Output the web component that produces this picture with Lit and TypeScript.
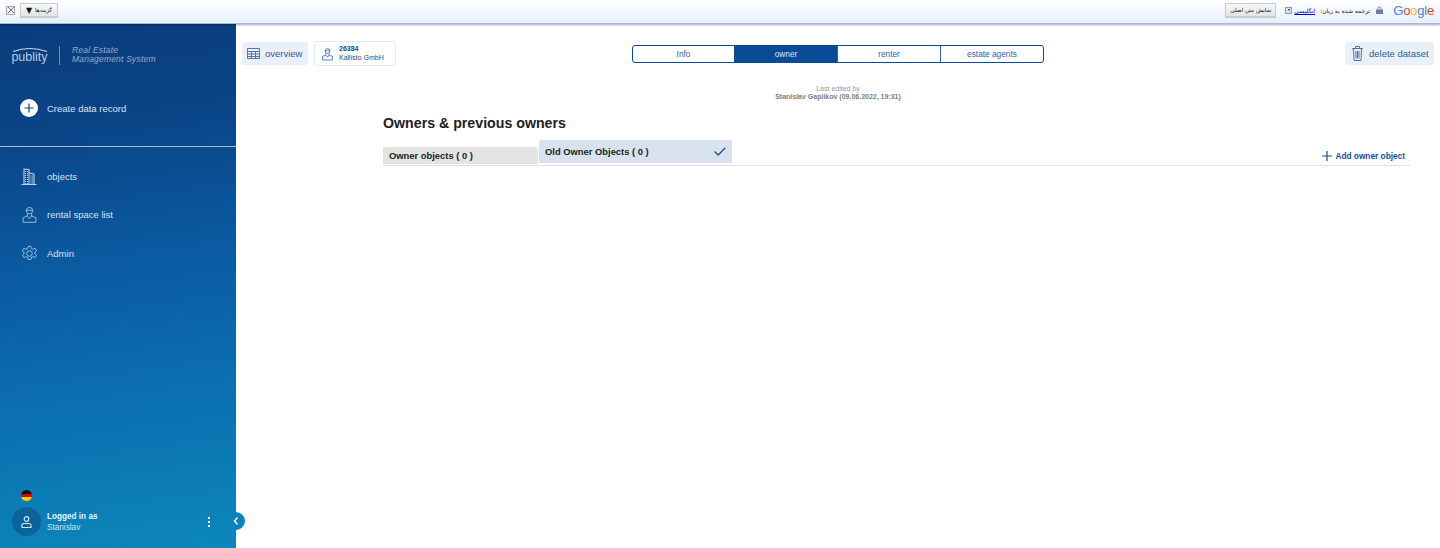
import { LitElement, html, css, svg } from "lit";
import { customElement } from "lit/decorators.js";

const personIcon = svg`<circle cx="12" cy="6.500" r="4.500"/><path d="M7.500 6h9M9 11v3l-6 2.500V23h18v-6.500L15 14v-3M9 14l3 4 3-4"/>`;

@customElement("app-root")
export class AppRoot extends LitElement {
  static styles = css`
    :host { display: flex; flex-direction: column; width: 1440px; height: 548px; overflow: hidden; background: #fff; font-family: "Liberation Sans", Arial, sans-serif; }
    * { box-sizing: border-box; }
    svg { display: block; flex: none; }
    .gt { height: 24px; flex: none; display: flex; align-items: center; padding: 0 6px 3px 6px; background: linear-gradient(#ffffff, #e6effb); border-bottom: 1px solid #9dbcf0; box-shadow: 0 1px 2px rgba(0,0,0,.35); position: relative; z-index: 2; font-family: "DejaVu Sans", sans-serif; font-size: 6px; color: #222; }
    .gt-x { width: 9px; height: 9px; border: 1px solid #aaa; background: #eee; margin-right: 5px; display: flex; align-items: center; justify-content: center; }
    .gt-btn { height: 14px; display: flex; align-items: center; justify-content: center; gap: 3px; background: linear-gradient(#f8f8f8, #e4e4e4); border: 1px solid #ccc; box-shadow: 0 1px 1px rgba(0,0,0,.15); color: #111; font-size: 5.7px; }
    .opts { width: 38px; }
    .orig { width: 51px; }
    .arrow { font-size: 8px; }
    .gt-right { margin-left: auto; display: flex; align-items: center; }
    .gt-drop { width: 7px; height: 7px; background: #d5e3fa; border: 1px solid #7a9cd8; margin: 0 2px 0 9px; display: flex; align-items: center; justify-content: center; }
    .gt-drop i { display: block; border-left: 1.5px solid transparent; border-right: 1.5px solid transparent; border-top: 2.5px solid #123; }
    .gt-link { color: #00c; text-decoration: underline; font-size: 6px; }
    .gt-lang { margin-left: 5px; }
    .gt-lock { margin: 0 10px 0 6px; }
    .google { font-family: "Liberation Sans", sans-serif; font-size: 13px; letter-spacing: -.2px; }
    .b { color: #4285f4; } .r { color: #ea4335; } .y { color: #fbbc05; } .g { color: #34a853; }
    .main { flex: 1; display: flex; min-height: 0; }

    .side { width: 236px; flex: none; display: flex; flex-direction: column; color: #d5e4f0; font-size: 9.5px; position: relative;
      background: linear-gradient(172deg, #0a3c7c 0%, #0a4688 22%, #0b5aa2 45%, #0b6fb0 70%, #0c87bb 100%); }
    .brand { height: 123px; flex: none; border-bottom: 1px solid #9fc0d8; display: flex; flex-direction: column; padding: 20px 0 0 11px; }
    .logo { display: flex; align-items: center; height: 22px; }
    .wordmark { width: 37px; margin-right: 11px; display: flex; flex-direction: column; align-items: center; color: #b9cde3; font-size: 12.5px; line-height: 13px; }
    .wordmark svg { margin-bottom: -1px; }
    .rule { width: 1px; height: 19px; background: #6d8fb8; margin-right: 12px; }
    .tag { font-style: italic; color: #8faccd; font-size: 8.5px; line-height: 9.5px; letter-spacing: .2px; }
    .create { display: flex; align-items: center; gap: 9px; margin: 33px 0 0 9px; color: #d5e2ef; }
    .plus { width: 18px; height: 18px; border-radius: 50%; background: #fff; display: flex; align-items: center; justify-content: center; }
    .nav { display: flex; flex-direction: column; padding-top: 10px; }
    .nav-item { height: 38.5px; display: flex; align-items: center; padding-left: 21px; gap: 9px; }
    .nav-item svg { stroke: #b8d4ea; fill: none; stroke-width: 1.1; }
    .foot { margin-top: auto; padding: 0 0 12px 12px; }
    .flag { width: 11px; height: 11px; border-radius: 50%; margin: 0 0 6px 9px; background: linear-gradient(#111 0 33%, #d00 33% 66%, #fc0 66%); }
    .user { display: flex; align-items: center; gap: 6px; }
    .avatar { width: 29px; height: 29px; border-radius: 50%; background: #0a6499; display: flex; align-items: center; justify-content: center; }
    .avatar svg { stroke: #cfe2ef; fill: none; stroke-width: 1.2; }
    .uname { font-size: 8.2px; line-height: 11px; color: #cfe3f0; }
    .uname b { display: block; color: #e8f2f8; }
    .dots { margin-left: auto; margin-right: 26px; display: flex; flex-direction: column; gap: 2px; }
    .dots i { width: 2px; height: 2px; background: #fff; display: block; }
    .collapse { position: absolute; right: -9px; bottom: 18px; width: 18px; height: 18px; border-radius: 50%; background: #0d82b9; display: flex; align-items: center; justify-content: center; }

    .content { flex: 1; min-width: 0; display: flex; flex-direction: column; }
    .top { display: grid; grid-template-columns: 1fr auto 1fr; align-items: center; padding: 17px 6px 0 6px; }
    .left { display: flex; align-items: center; gap: 6px; }
    .pill { height: 23px; display: flex; align-items: center; background: #eaf0f7; border-radius: 3px; color: #2a5f9e; font-size: 9.5px; }
    .overview { width: 66px; padding-left: 5px; gap: 5px; }
    .del { width: 89px; padding-left: 7px; gap: 6px; justify-self: end; }
    .card { width: 82px; height: 25px; display: flex; align-items: center; gap: 5px; padding-left: 6px; border: 1px solid #e6ebf2; border-radius: 3px; color: #21508c; font-size: 7px; line-height: 8.5px; }
    .card b { display: block; color: #0c4a93; }
    .seg { width: 412px; height: 18px; display: grid; grid-template-columns: 101fr 103fr 103fr 103fr; border: 1.5px solid #0b4a96; border-radius: 3px; overflow: hidden; }
    .seg div { display: flex; align-items: center; justify-content: center; color: #2f639f; font-size: 8.3px; border-left: 1px solid #2e68ab; }
    .seg div:first-child { border-left: 0; }
    .seg .on { background: #0b4a96; color: #dbe7f3; border-left-color: #0b4a96; }
    .edited { margin-top: 19px; text-align: center; color: #9a9a9a; font-size: 7px; line-height: 8px; }
    .edited b { display: block; color: #7d7d7d; }
    .body { padding: 13px 30px 0 147px; }
    h1 { margin: 0; font-size: 14.2px; line-height: 18px; color: #222; font-weight: bold; }
    .tabs { display: flex; align-items: flex-end; margin-top: 5px; height: 29px; border-bottom: 1px solid #e2e2e2; padding-bottom: 1px; }
    .tab { font-weight: bold; font-size: 9.4px; color: #222; border-radius: 2px 2px 0 0; display: flex; padding-left: 6px; }
    .t1 { width: 155px; height: 17px; background: #e4e4e4; align-items: center; margin-right: 1px; }
    .t2 { width: 193px; height: 23px; background: #d7e2ee; padding: 6px 6px 0 6px; justify-content: space-between; margin-bottom: 1px; }
    .add { margin-left: auto; align-self: center; display: flex; align-items: center; gap: 3px; padding: 10px 5px 0 0; color: #164d92; font-weight: bold; font-size: 8.3px; }
    .windows { stroke-dasharray: 1 1; }
  `;

  render() {
    return html`
      <div class="gt">
        <div class="gt-x"><svg width="6" height="6" viewBox="0 0 6 6" stroke="#777"><path d="M0 0l6 6M6 0L0 6"/></svg></div>
        <div class="gt-btn opts"><span class="arrow">▼</span><span dir="rtl">گزینه‌ها</span></div>
        <div class="gt-right">
          <div class="gt-btn orig">نمایش متن اصلی</div>
          <div class="gt-drop"><i></i></div>
          <span class="gt-link">انگلیسی</span>
          <span class="gt-lang" dir="rtl">ترجمه شده به زبان:</span>
          <svg class="gt-lock" width="7" height="8" viewBox="0 0 7 8"><path d="M2 4V2.500a1.500 1.500 0 0 1 3 0V4" fill="none" stroke="#6a80a8"/><rect y="3.500" width="7" height="4.500" fill="#6a80a8"/></svg>
          <span class="google"><span class="b">G</span><span class="r">o</span><span class="y">o</span><span class="b">g</span><span class="g">l</span><span class="r">e</span></span>
        </div>
      </div>
      <div class="main">
        <aside class="side">
          <div class="brand">
            <div class="logo">
              <div class="wordmark">
                <svg width="36" height="5" viewBox="0 0 36 5"><path d="M1 4.500Q18 -1.500 35 4.500" fill="none" stroke="#c6d6e8" stroke-width="1.100"/></svg>
                <span>publity</span>
              </div>
              <div class="rule"></div>
              <div class="tag">Real Estate<br />Management System</div>
            </div>
            <div class="create">
              <div class="plus"><svg width="10" height="10" viewBox="0 0 10 10" stroke="#0a4688" stroke-width="1.200"><path d="M5 .5v9M.5 5h9"/></svg></div>
              <span>Create data record</span>
            </div>
          </div>
          <nav class="nav">
            <div class="nav-item">
              <svg width="17" height="17" viewBox="0 0 17 17">
                <path d="M.5 16.500h15M3 16V1l5 .5V16M8 5l5 1v10"/>
                <path class="windows" d="M4.500 3v13M6.500 3v13M10 7.500V16M11.500 7.500V16"/>
              </svg>
              <span>objects</span>
            </div>
            <div class="nav-item">
              <svg width="17" height="17" viewBox="0 0 24 24">${personIcon}</svg>
              <span>rental space list</span>
            </div>
            <div class="nav-item">
              <svg width="17" height="17" viewBox="0 0 24 24"><circle cx="12" cy="12" r="4"/><path d="M10 2h4l.7 3 2.300 1 2.700-1.500 2.300 3.500-2.300 2v2.400l2.300 2-2.300 3.500-2.700-1.500-2.300 1-.7 3h-4l-.7-3-2.300-1-2.700 1.500-2.300-3.500 2.300-2v-2.400l-2.300-2 2.300-3.500 2.700 1.500 2.300-1z"/></svg>
              <span>Admin</span>
            </div>
          </nav>
          <div class="foot">
            <div class="flag"></div>
            <div class="user">
              <div class="avatar"><svg width="11" height="12" viewBox="0 0 11 12"><circle cx="5.500" cy="3" r="2.300"/><path d="M1 11.500V9.500q0-2 2-2h5q2 0 2 2v2z"/></svg></div>
              <div class="uname"><b>Logged in as</b>Stanislav</div>
              <div class="dots"><i></i><i></i><i></i></div>
            </div>
          </div>
          <div class="collapse"><svg width="6" height="8" viewBox="0 0 6 8" fill="none" stroke="#fff" stroke-width="1.300"><path d="M4.500 .5L1.500 4l3 3.500"/></svg></div>
        </aside>
        <section class="content">
          <div class="top">
            <div class="left">
              <div class="pill overview">
                <svg width="13" height="11" viewBox="0 0 13 11" fill="none" stroke="#4d77ab"><path d="M.5.5h12v10H.5zM.5 3.500h12M.5 6h12M.5 8.500h12M4.500 3.500v7M8.500 3.500v7"/></svg>
                <span>overview</span>
              </div>
              <div class="card">
                <svg width="13" height="14" viewBox="0 0 24 24" fill="none" stroke="#2a5f9e" stroke-width="1.400">${personIcon}</svg>
                <div><b>26384</b>Kallisto GmbH</div>
              </div>
            </div>
            <div class="seg">
              <div>Info</div>
              <div class="on">owner</div>
              <div>renter</div>
              <div>estate agents</div>
            </div>
            <div class="pill del">
              <svg width="11" height="15" viewBox="0 0 11 15" fill="none" stroke="#4d77ab"><path d="M0 2.500h11M3.500 2.500V.5h4v2M1.500 2.500l.5 12h7l.5-12M4 5v7.500M5.500 5v7.500M7 5v7.500"/></svg>
              <span>delete dataset</span>
            </div>
          </div>
          <div class="edited">Last edited by<b>Stanislav Gaplikov (09.06.2022, 19:31)</b></div>
          <div class="body">
            <h1>Owners &amp; previous owners</h1>
            <div class="tabs">
              <div class="tab t1">Owner objects ( 0 )</div>
              <div class="tab t2">
                <span>Old Owner Objects ( 0 )</span>
                <svg width="12" height="9" viewBox="0 0 12 9" fill="none" stroke="#1c5aa6" stroke-width="1.400" style="margin-top:1px"><path d="M.7 4.500l3.500 3.500L11.300.7"/></svg>
              </div>
              <div class="add">
                <svg width="10" height="10" viewBox="0 0 10 10" stroke="#164d92" stroke-width="1.200"><path d="M5 0v10M0 5h10"/></svg>
                <span>Add owner object</span>
              </div>
            </div>
          </div>
        </section>
      </div>
    `;
  }
}
